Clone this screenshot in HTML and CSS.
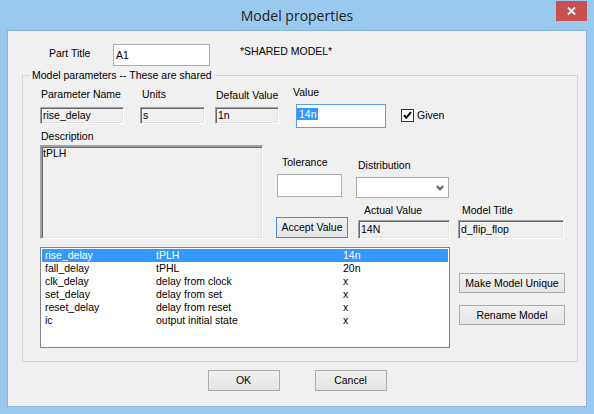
FILE: index.html
```html
<!DOCTYPE html>
<html>
<head>
<meta charset="utf-8">
<title>Model properties</title>
<link rel="stylesheet" href="styles.css">
</head>
<body>
<div class="window">
  <div class="titlebar">
    <div></div>
    <div class="title">Model properties</div>
    <div class="tb-right">
      <div class="close">
        <svg width="9" height="8" viewBox="0 0 9 8"><path d="M1 0.5 L8 7.5 M8 0.5 L1 7.5" stroke="#fff" stroke-width="1.9" fill="none"/></svg>
      </div>
    </div>
  </div>
  <div class="client">
    <div class="row-part">
      <span class="lbl part-lbl">Part Title</span>
      <div class="edit part-edit">A1</div>
      <span class="lbl shared">*SHARED MODEL*</span>
    </div>

    <div class="group">
      <div class="legend">Model parameters -- These are shared</div>

      <div class="sec-a">
        <div class="c-pname">
          <div class="lbl">Parameter Name</div>
          <div class="ro small-ro">rise_delay</div>
        </div>
        <div class="c-units">
          <div class="lbl">Units</div>
          <div class="ro small-ro">s</div>
        </div>
        <div class="c-def">
          <div class="lbl">Default Value</div>
          <div class="ro small-ro">1n</div>
        </div>
        <div class="c-val">
          <div class="lbl">Value</div>
          <div class="edit val-edit"><span class="seltext">14n</span></div>
        </div>
        <div class="c-given">
          <div class="chk">
            <svg width="11" height="11" viewBox="0 0 11 11"><path d="M2 5.2 L4.3 7.8 L9 2.2" stroke="#000" stroke-width="2" fill="none"/></svg>
          </div>
          <span class="lbl given">Given</span>
        </div>
      </div>

      <div class="sec-b">
        <div class="desc-col">
          <div class="lbl">Description</div>
          <div class="ro desc-box">tPLH</div>
        </div>
        <div class="right-b">
          <div class="rb-row1">
            <div class="c-tol">
              <div class="lbl">Tolerance</div>
              <div class="edit tol-edit"></div>
            </div>
            <div class="c-dist">
              <div class="lbl">Distribution</div>
              <div class="select">
                <svg width="8" height="6" viewBox="0 0 8 6"><path d="M0.8 1 L4 4.4 L7.2 1" stroke="#5a5a5a" stroke-width="2" fill="none"/></svg>
              </div>
            </div>
          </div>
          <div class="rb-row2">
            <button class="btn btn-accept">Accept Value</button>
            <div class="c-act">
              <div class="lbl">Actual Value</div>
              <div class="ro mid-ro act-ro">14N</div>
            </div>
            <div class="c-mt">
              <div class="lbl">Model Title</div>
              <div class="ro mid-ro mt-ro">d_flip_flop</div>
            </div>
          </div>
        </div>
      </div>

      <div class="sec-c">
        <div class="list">
          <div class="lrow sel"><span>rise_delay</span><span>tPLH</span><span>14n</span></div>
          <div class="lrow"><span>fall_delay</span><span>tPHL</span><span>20n</span></div>
          <div class="lrow"><span>clk_delay</span><span>delay from clock</span><span>x</span></div>
          <div class="lrow"><span>set_delay</span><span>delay from set</span><span>x</span></div>
          <div class="lrow"><span>reset_delay</span><span>delay from reset</span><span>x</span></div>
          <div class="lrow"><span>ic</span><span>output initial state</span><span>x</span></div>
        </div>
        <div class="side-btns">
          <button class="btn side-btn">Make Model Unique</button>
          <button class="btn side-btn">Rename Model</button>
        </div>
      </div>
    </div>

    <div class="footer">
      <button class="btn foot-btn">OK</button>
      <button class="btn foot-btn">Cancel</button>
    </div>
  </div>
</div>
</body>
</html>
```

FILE: styles.css
```css
html, body {
  margin: 0;
  padding: 0;
}
body {
  font-family: "Liberation Sans", Arial, sans-serif;
  font-size: 10.5px;
  color: #000;
  background: #fff;
}
.window {
  width: 594px;
  height: 414px;
  background: #99c9ef;
  display: flex;
  flex-direction: column;
  box-sizing: border-box;
}
.titlebar {
  height: 30px;
  display: grid;
  grid-template-columns: 1fr auto 1fr;
}
.title {
  font-family: "Open Sans", "Noto Sans", sans-serif;
  font-size: 14px;
  color: #222;
  line-height: 29px;
  margin-top: 1px;
}
.tb-right {
  display: flex;
  justify-content: flex-end;
  align-items: flex-start;
}
.close {
  width: 31px;
  height: 20px;
  margin: 1px 7px 0 0;
  background: #c75050;
  display: flex;
  align-items: center;
  justify-content: center;
}
.client {
  flex: 1;
  margin: 0 7px 7px;
  border: 1px solid #8db3d6;
  background: #f0f0f0;
}
.lbl {
  line-height: 13px;
  white-space: nowrap;
}
.row-part {
  display: flex;
  align-items: flex-start;
  padding: 13px 0 0 41px;
}
.part-lbl {
  width: 64px;
  margin-top: 3px;
}
.edit {
  box-sizing: border-box;
  background: #fff;
  border: 1px solid #abadb3;
}
.part-edit {
  width: 97px;
  height: 22px;
  line-height: 20px;
  padding-left: 2px;
}
.shared {
  margin: 1px 0 0 30px;
}
.group {
  margin: 9px 8px 0 14px;
  border: 1px solid #d5d5d5;
  padding-bottom: 13px;
}
.legend {
  display: table;
  margin: -7px 0 0 7px;
  padding: 0 2px;
  background: #f0f0f0;
  line-height: 13px;
}
.ro {
  box-sizing: border-box;
  background: #f0f0f0;
  border: 1px solid;
  border-color: #a0a0a0 #fff #fff #a0a0a0;
  box-shadow: inset 1px 1px #696969, inset -1px -1px #e3e3e3;
  padding-left: 2px;
  white-space: nowrap;
}
.small-ro {
  height: 17px;
  line-height: 15px;
  margin-top: 6px;
}
.sec-a {
  display: flex;
  align-items: flex-start;
}
.sec-a .lbl {
  margin-top: 6px;
}
.c-pname {
  margin-left: 17px;
  width: 84px;
}
.c-pname .lbl {
  padding-left: 1px;
}
.c-units {
  margin-left: 16px;
  width: 65px;
}
.c-units .lbl {
  padding-left: 2px;
}
.c-def {
  margin-left: 10px;
  width: 64px;
}
.c-def .lbl {
  margin-top: 7px;
  padding-left: 1px;
}
.c-def .small-ro {
  margin-top: 5px;
}
.c-val {
  margin-left: 17px;
  width: 90px;
}
.sec-a .c-val .lbl {
  margin: 4px 0 0 -3px;
}
.val-edit {
  width: 90px;
  height: 24px;
  margin-top: 5px;
  border-color: #569de5;
  padding-top: 3px;
}
.seltext {
  display: inline-block;
  background: #3399ff;
  color: #fff;
  line-height: 12px;
  height: 12px;
  padding: 0 1px 0 2px;
}
.c-given {
  margin: 26px 0 0 15px;
  display: flex;
  align-items: center;
}
.chk {
  box-sizing: border-box;
  width: 13px;
  height: 13px;
  border: 1px solid #333;
  background: #fff;
  display: flex;
}
.sec-a .given {
  margin: 1px 0 0 3px;
}
.sec-b {
  display: flex;
  align-items: flex-start;
}
.desc-col {
  margin-left: 17px;
  width: 223px;
}
.desc-col .lbl {
  margin-top: 2px;
  padding-left: 1px;
}
.desc-box {
  margin-top: 2px;
  height: 94px;
  border-width: 2px 1px 1px 2px;
  border-color: #a0a0a0 #fff #fff #a0a0a0;
  box-shadow: inset 1px 1px #696969, inset -1px -1px #e3e3e3;
  line-height: 13px;
  padding: 0 1px;
}
.right-b {
  margin-left: 13px;
}
.rb-row1, .rb-row2 {
  display: flex;
  align-items: flex-start;
}
.c-tol .lbl {
  margin-top: 28px;
  padding-left: 6px;
}
.tol-edit {
  width: 65px;
  height: 23px;
  margin: 5px 0 0 1px;
}
.c-dist {
  margin-left: 14px;
}
.c-dist .lbl {
  margin-top: 31px;
  padding-left: 2px;
}
.select {
  box-sizing: border-box;
  width: 93px;
  height: 21px;
  margin-top: 5px;
  background: #fff;
  border: 1px solid #acacac;
  display: flex;
  justify-content: flex-end;
  align-items: center;
  padding-right: 4px;
}
.btn {
  box-sizing: border-box;
  font-family: "Liberation Sans", Arial, sans-serif;
  font-size: 10.5px;
  color: #000;
  border: 1px solid #acacac;
  background: linear-gradient(#f0f0f0, #e5e5e5);
  padding: 0;
  margin: 0;
  line-height: 13px;
}
.btn-accept {
  width: 72px;
  height: 21px;
  margin-top: 19px;
  border-color: #4a8fd6;
}
.mid-ro {
  height: 19px;
  line-height: 17px;
  margin-top: 3px;
}
.c-act {
  margin-left: 10px;
}
.c-act .lbl {
  margin-top: 6px;
  padding-left: 6px;
}
.act-ro {
  width: 92px;
}
.c-mt {
  margin-left: 8px;
}
.c-mt .lbl {
  margin-top: 6px;
  padding-left: 4px;
}
.mt-ro {
  width: 106px;
}
.sec-c {
  display: flex;
  align-items: flex-start;
  margin-top: 8px;
}
.list {
  box-sizing: border-box;
  margin-left: 17px;
  width: 410px;
  height: 101px;
  border: 1px solid #828282;
  padding: 1px;
  background: #fff;
}
.lrow {
  display: grid;
  grid-template-columns: 111px 187px 1fr;
  height: 13px;
  line-height: 13px;
  padding-left: 3px;
  white-space: nowrap;
}
.lrow.sel {
  background: #3399ff;
  color: #fff;
}
.side-btns {
  margin: 26px 0 0 9px;
  display: flex;
  flex-direction: column;
  gap: 12px;
}
.side-btn {
  width: 106px;
  height: 20px;
}
.footer {
  display: flex;
  justify-content: center;
  gap: 35px;
  margin-top: 8px;
}
.foot-btn {
  width: 72px;
  height: 21px;
}
```
